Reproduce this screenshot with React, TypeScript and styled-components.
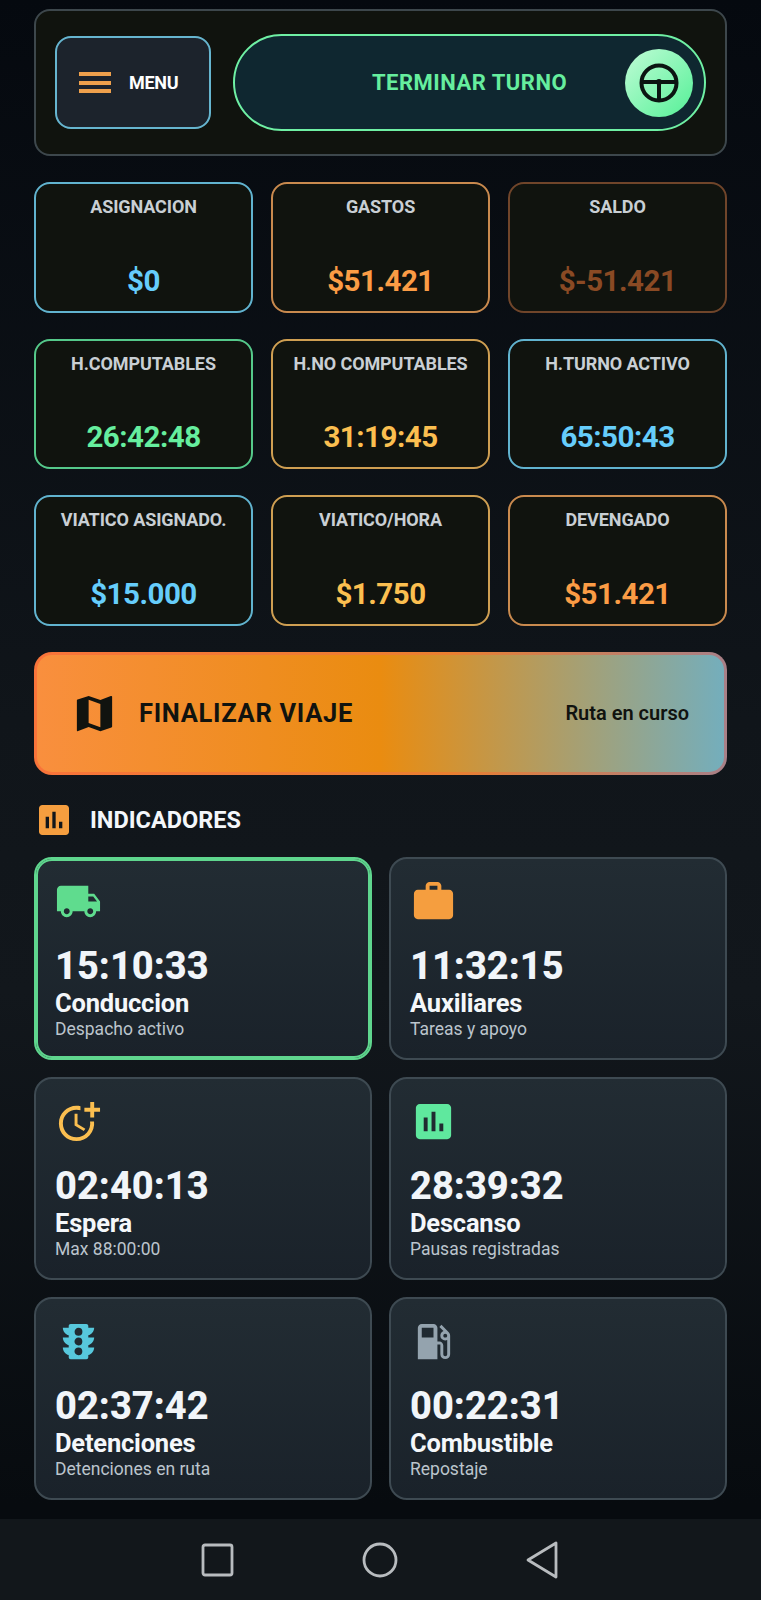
import type { ComponentType } from "react";
import styled, { createGlobalStyle } from "styled-components";
import {
  MdInsertChart,
  MdLocalGasStation,
  MdLocalShipping,
  MdMap,
  MdMoreTime,
  MdTraffic,
  MdWork,
} from "react-icons/md";

interface StatItem {
  label: string;
  value: string;
  border: string;
  color: string;
}

interface IndicatorItem {
  time: string;
  name: string;
  note: string;
  color: string;
  Icon: ComponentType<{ size?: number; color?: string }>;
  active?: boolean;
}

const stats: StatItem[] = [
  { label: "ASIGNACION", value: "$0", border: "#61b3cf", color: "#66cdfb" },
  { label: "GASTOS", value: "$51.421", border: "#c98a4e", color: "#fb9c45" },
  { label: "SALDO", value: "$-51.421", border: "#70452a", color: "#8a4a24" },
  { label: "H.COMPUTABLES", value: "26:42:48", border: "#55c98a", color: "#66ee9e" },
  { label: "H.NO COMPUTABLES", value: "31:19:45", border: "#cf9f52", color: "#fbbf50" },
  { label: "H.TURNO ACTIVO", value: "65:50:43", border: "#61b3cf", color: "#66cdfb" },
  { label: "VIATICO ASIGNADO.", value: "$15.000", border: "#61b3cf", color: "#66cdfb" },
  { label: "VIATICO/HORA", value: "$1.750", border: "#cf9f52", color: "#fbbf50" },
  { label: "DEVENGADO", value: "$51.421", border: "#c98a4e", color: "#fb9c45" },
];

const indicators: IndicatorItem[] = [
  { time: "15:10:33", name: "Conduccion", note: "Despacho activo", color: "#5fdc8e", Icon: MdLocalShipping, active: true },
  { time: "11:32:15", name: "Auxiliares", note: "Tareas y apoyo", color: "#f59e3f", Icon: MdWork },
  { time: "02:40:13", name: "Espera", note: "Max 88:00:00", color: "#fbbf50", Icon: MdMoreTime },
  { time: "28:39:32", name: "Descanso", note: "Pausas registradas", color: "#5fe89e", Icon: MdInsertChart },
  { time: "02:37:42", name: "Detenciones", note: "Detenciones en ruta", color: "#57c8dc", Icon: MdTraffic },
  { time: "00:22:31", name: "Combustible", note: "Repostaje", color: "#94a3ae", Icon: MdLocalGasStation },
];

const SteeringWheel = () => (
  <svg width="42" height="42" viewBox="0 0 42 42" fill="none" stroke="#0b1512" strokeWidth="4">
    <circle cx="21" cy="21" r="17.5" />
    <path d="M4 20h34M21 20v18" />
    <circle cx="21" cy="20" r="3" fill="#0b1512" stroke="none" />
  </svg>
);

const App = () => {
  return (
    <>
      <GlobalStyle />
      <Page>
        <Content>
          <TopPanel>
            <MenuButton>
              <Burger>
                <span />
                <span />
                <span />
              </Burger>
              MENU
            </MenuButton>
            <ShiftButton>
              TERMINAR TURNO
              <ShiftKnob>
                <SteeringWheel />
              </ShiftKnob>
            </ShiftButton>
          </TopPanel>

          <StatsGrid>
            {stats.map((stat) => (
              <StatCard key={stat.label} $border={stat.border}>
                <StatLabel>{stat.label}</StatLabel>
                <StatValue $color={stat.color}>{stat.value}</StatValue>
              </StatCard>
            ))}
          </StatsGrid>

          <TripButton>
            <TripTitle>
              <MdMap size={47} />
              FINALIZAR VIAJE
            </TripTitle>
            <TripStatus>Ruta en curso</TripStatus>
          </TripButton>

          <SectionHeader>
            <MdInsertChart size={40} color="#f59e3f" />
            <SectionTitle>INDICADORES</SectionTitle>
          </SectionHeader>

          <IndicatorGrid>
            {indicators.map(({ time, name, note, color, Icon, active }) => (
              <IndicatorCard key={name} $active={active}>
                <IconSlot>
                  <Icon size={47} color={color} />
                </IconSlot>
                <IndicatorTime>{time}</IndicatorTime>
                <IndicatorName>{name}</IndicatorName>
                <IndicatorNote>{note}</IndicatorNote>
              </IndicatorCard>
            ))}
          </IndicatorGrid>
        </Content>

        <NavBar>
          <svg width="36" height="38" viewBox="0 0 36 38" fill="none" stroke="#b8bcbf" strokeWidth="2.8">
            <rect x="4" y="4" width="29" height="30" rx="2" />
          </svg>
          <svg width="38" height="38" viewBox="0 0 38 38" fill="none" stroke="#b8bcbf" strokeWidth="2.8">
            <circle cx="19" cy="19" r="16" />
          </svg>
          <svg width="36" height="40" viewBox="0 0 36 40" fill="none" stroke="#b8bcbf" strokeWidth="2.8" strokeLinejoin="round">
            <path d="M31 3v34L3 20z" />
          </svg>
        </NavBar>
      </Page>
    </>
  );
};

const GlobalStyle = createGlobalStyle`
  * {
    box-sizing: border-box;
  }
  body {
    margin: 0;
    background: #0b0f13;
    font-family: Roboto, "Liberation Sans", sans-serif;
  }
  button {
    font-family: inherit;
  }
`;

const Page = styled.div`
  width: 761px;
  height: 1600px;
  display: flex;
  flex-direction: column;
  justify-content: space-between;
  overflow: hidden;
  background: linear-gradient(180deg, #05090f 0%, #10151a 45%, #12171c 62%, #070b0f 94%);
`;

const Content = styled.main`
  padding: 9px 34px 0;
  display: flex;
  flex-direction: column;
`;

const TopPanel = styled.section`
  height: 147px;
  padding: 0 19px;
  display: flex;
  align-items: center;
  gap: 22px;
  background: #10130e;
  border: 2px solid #3d474c;
  border-radius: 16px;
`;

const MenuButton = styled.button`
  width: 156px;
  height: 93px;
  flex: none;
  padding: 0 0 0 22px;
  display: flex;
  align-items: center;
  gap: 18px;
  color: #fff;
  font-size: 18px;
  font-weight: 700;
  letter-spacing: -0.3px;
  background: #1c232c;
  border: 2px solid #66b5cf;
  border-radius: 16px;
`;

const Burger = styled.div`
  width: 32px;
  display: flex;
  flex-direction: column;
  gap: 4.5px;
  span {
    height: 4px;
    background: #eea04c;
  }
`;

const ShiftButton = styled.button`
  position: relative;
  flex: 1;
  height: 97px;
  padding: 0;
  color: #66ee9e;
  font-size: 22px;
  font-weight: 700;
  letter-spacing: 0.5px;
  background: #0f2730;
  border: 2px solid #6ff0a4;
  border-radius: 49px;
`;

const ShiftKnob = styled.span`
  position: absolute;
  top: 13px;
  right: 11px;
  width: 68px;
  height: 68px;
  display: flex;
  align-items: center;
  justify-content: center;
  border-radius: 50%;
  background: linear-gradient(135deg, #c0fcd6 0%, #55f097 100%);
`;

const StatsGrid = styled.section`
  margin-top: 26px;
  display: grid;
  grid-template-columns: repeat(3, 219px);
  grid-auto-rows: 130.67px;
  column-gap: 18px;
  row-gap: 26px;
`;

const StatCard = styled.div<{ $border: string }>`
  padding: 13px 4px 13px;
  display: flex;
  flex-direction: column;
  justify-content: space-between;
  align-items: center;
  background: #10130e;
  border: 2px solid ${(props) => props.$border};
  border-radius: 16px;
`;

const StatLabel = styled.div`
  color: #c9cfd4;
  font-size: 18px;
  font-weight: 700;
  line-height: 20px;
  letter-spacing: -0.1px;
  white-space: nowrap;
`;

const StatValue = styled.div<{ $color: string }>`
  color: ${(props) => props.$color};
  font-size: 29.5px;
  font-weight: 700;
  line-height: 34px;
  letter-spacing: -0.5px;
`;

const TripButton = styled.button`
  height: 123px;
  margin-top: 26px;
  padding: 0 35px 0 34px;
  display: flex;
  align-items: center;
  justify-content: space-between;
  color: #11130f;
  background:
    linear-gradient(90deg, #f98f3e 0%, #ea8c10 50%, #74aebc 100%) padding-box,
    linear-gradient(90deg, #f9743a 0%, #ea7f30 60%, #a88088 100%) border-box;
  border: 3px solid transparent;
  border-radius: 18px;
`;

const TripTitle = styled.div`
  display: flex;
  align-items: center;
  gap: 21px;
  font-size: 25.5px;
  font-weight: 700;
  letter-spacing: 0.7px;
`;

const TripStatus = styled.div`
  font-size: 20px;
  font-weight: 600;
`;

const SectionHeader = styled.header`
  height: 30px;
  margin-top: 30px;
  display: flex;
  align-items: center;
  gap: 16px;
`;

const SectionTitle = styled.h2`
  margin: 0;
  color: #f4f7fa;
  font-size: 23.5px;
  font-weight: 700;
`;

const IndicatorGrid = styled.section`
  margin-top: 22px;
  display: grid;
  grid-template-columns: repeat(2, 338px);
  grid-auto-rows: 203px;
  column-gap: 17px;
  row-gap: 17px;
`;

const IndicatorCard = styled.article<{ $active?: boolean }>`
  padding: 19px 19px 0;
  background: linear-gradient(180deg, #222c33 0%, #1a222a 100%);
  border: 2px solid ${(props) => (props.$active ? "#5fd68e" : "#3e4a52")};
  border-radius: 18px;
  box-shadow: ${(props) => (props.$active ? "inset 0 0 0 2px #5fd68e" : "none")};
`;

const IconSlot = styled.div`
  height: 48px;
  svg {
    display: block;
  }
`;

const IndicatorTime = styled.div`
  margin-top: 18px;
  color: #f1f5f9;
  font-size: 38px;
  font-weight: 800;
  line-height: 44px;
`;

const IndicatorName = styled.div`
  margin-top: 1px;
  color: #f4f7fa;
  font-size: 25.5px;
  font-weight: 700;
  line-height: 28px;
  letter-spacing: -0.2px;
`;

const IndicatorNote = styled.div`
  margin-top: 1px;
  color: #bcc5cd;
  font-size: 17.5px;
  line-height: 22px;
`;

const NavBar = styled.nav`
  height: 81px;
  flex: none;
  padding-left: 199px;
  display: flex;
  align-items: center;
  gap: 126px;
  background: #12171b;
`;

export default App;
